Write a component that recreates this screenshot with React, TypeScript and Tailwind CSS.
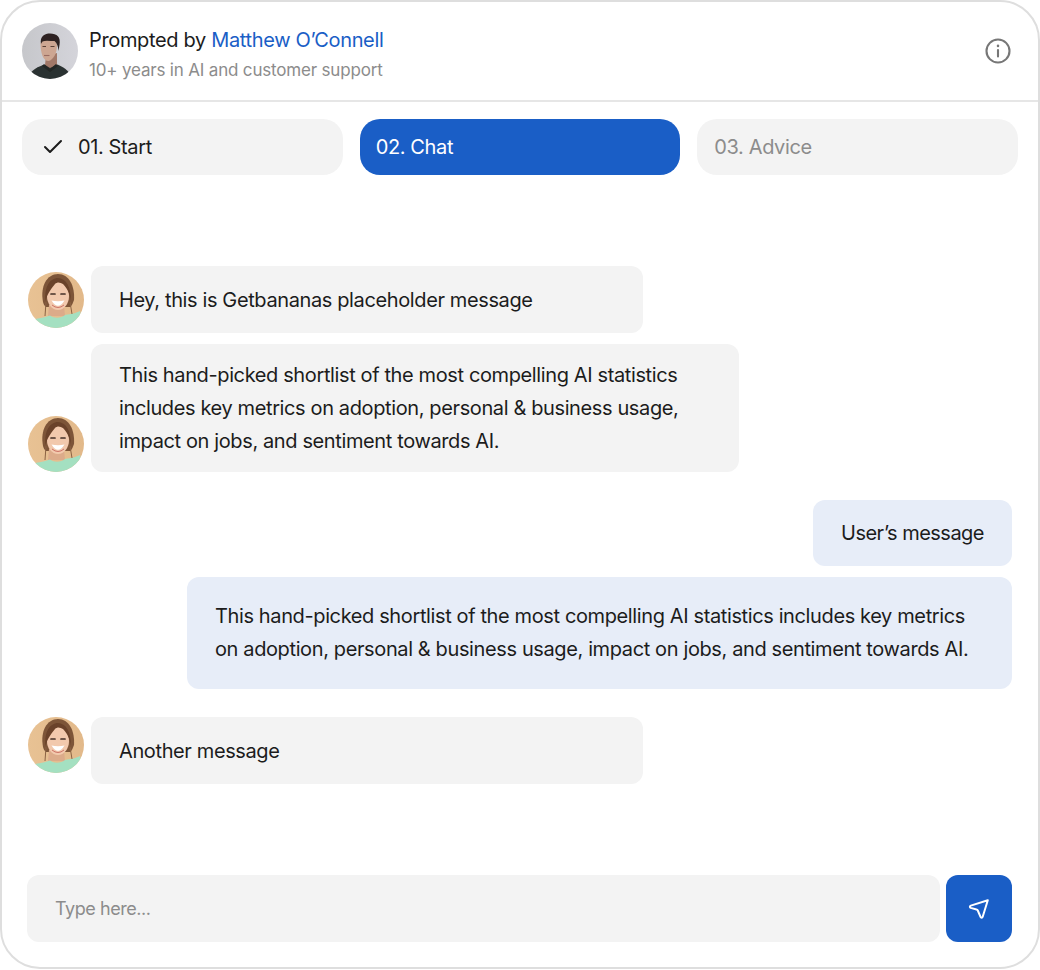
import React from "react";
import { Check } from "lucide-react";

function Man() {
  return (
    <svg viewBox="0 0 56 56" className="w-14 h-14 rounded-full shrink-0">
      <defs>
        <filter id="mb"><feGaussianBlur stdDeviation="0.6" /></filter>
        <linearGradient id="mbg" x1="0" y1="0" x2="1" y2="0">
          <stop offset="0" stopColor="#c6c7cb" />
          <stop offset="1" stopColor="#d4d4da" />
        </linearGradient>
      </defs>
      <rect width="56" height="56" fill="url(#mbg)" />
      <g filter="url(#mb)">
        <path d="M6 56 C8 48 13 45 21 42 L34 41 C41 44 47 46 50 56 Z" fill="#2c3230" />
        <path d="M24 33 L35 30 L35 42 L28 45 L23 42 Z" fill="#a17867" />
        <path d="M18.500 20 C18.500 30 21 38 26.500 38 C31 37 35 31 35 22 L33 15 L22 15 Z" fill="#cda692" />
        <path d="M19 21 C17.500 13 23 10.500 28 10.500 C35 10.500 39 14 37.500 22 L36.500 28 C36 23 35 20 32.500 18 C28 18 23.500 17 20.500 18.500 C19.800 19.500 19.500 20 19 21 Z" fill="#2e2422" />
        <path d="M20.500 23.500 L24 23.500 M28.500 23.500 L32.500 23.500" stroke="#5a3f36" strokeWidth="1.100" />
        <path d="M22 32.500 L27.500 32.500" stroke="#9a6c62" strokeWidth="1.100" />
        <path d="M22 41 L28 46 L34 41 L36 43 L28 49 L20 43 Z" fill="#212625" />
      </g>
    </svg>
  );
}

function Woman() {
  return (
    <svg viewBox="0 0 56 56" className="w-14 h-14 rounded-full shrink-0">
      <defs>
        <filter id="wb"><feGaussianBlur stdDeviation="0.55" /></filter>
        <linearGradient id="wbg" x1="0" y1="0" x2="1" y2="0">
          <stop offset="0" stopColor="#e8c294" />
          <stop offset="1" stopColor="#e2b98a" />
        </linearGradient>
      </defs>
      <rect width="56" height="56" fill="url(#wbg)" />
      <g filter="url(#wb)">
        <path d="M15 30 C12 14 19 2 30 2 C41 2 47 14 46 28 C45 31 44 33 42.500 35 L18 35 C16.500 34 15.500 32 15 30 Z" fill="#7d5539" />
        <path d="M21 33 L20 44 L37 44 L36 33 Z" fill="#dcab8a" />
        <path d="M7 47 C13 46 18 45 22 43.500 C27 47 33 46 37 43 C44 42 48 41 52 39 L56 56 L0 56 Z" fill="#a4e0c1" />
        <ellipse cx="30" cy="24" rx="11" ry="14" fill="#f2c9ad" />
        <path d="M17.500 29 C16 15 22 6 30 6 C38 6 43 15 43 29 C42 23 40 17 35 12 C32 10 29 10 27 12 C24 16 20 20 17.500 29 Z" fill="#6a4329" />
        <path d="M23 22 L27 22 M33 22 L37 22" stroke="#453228" strokeWidth="1.700" strokeLinecap="round" />
        <path d="M23.500 28.500 Q30 39 36.500 28.500 Q30 30 23.500 28.500 Z" fill="#ffffff" />
        <path d="M24 33 Q30 38 36 33" stroke="#c7695f" strokeWidth="0.900" fill="none" />
        <path d="M18 30 L17 44 M42 30 L44 42" stroke="#8a6243" strokeWidth="1" fill="none" />
      </g>
    </svg>
  );
}

const bubble = "rounded-xl bg-[#f3f3f3] text-[20px] leading-[33px] tracking-[-0.38px] text-[#1c1c1c] px-7";
const user = "rounded-xl bg-[#e7edf8] text-[20px] leading-[33px] text-[#1c1c1c] px-7";

export default function App() {
  return (
    <div className="w-[1040px] h-[970px] bg-white" style={{ fontFamily: "Inter, sans-serif" }}>
      <div className="w-[1040px] h-[969px] border-2 border-[#dedede] rounded-[40px] flex flex-col overflow-hidden">
        <header className="h-[100px] border-b-2 border-[#e6e6e6] flex items-center pl-[20px] pr-[25px] shrink-0">
          <Man />
          <div className="ml-[11px] flex-1 pt-[4px]">
            <div className="text-[20px] leading-[28px] tracking-[-0.34px] text-[#1c1c1c]">
              Prompted by <span className="text-[#1a5ec6]">Matthew O’Connell</span>
            </div>
            <div className="text-[17px] leading-[22px] mt-[5px] text-[#8c8c8c] tracking-[-0.18px]">10+ years in AI and customer support</div>
          </div>
          <svg viewBox="0 0 30 30" className="w-[30px] h-[30px]" fill="none" stroke="#777777" strokeWidth="2.100" strokeLinecap="round">
            <circle cx="15" cy="15" r="11.500" />
            <path d="M15 14 V20.500" />
            <path d="M15 9.800 V10" strokeWidth="2.500" />
          </svg>
        </header>

        <nav className="flex gap-[17px] px-[20px] pt-[17px] shrink-0 tracking-[-0.38px]">
          <div className="h-14 w-[321px] rounded-[20px] bg-[#f3f3f3] flex items-center pl-[19px] text-[20px] text-[#1c1c1c]">
            <Check size={24} strokeWidth={2} className="mr-[13px]" />
            01. Start
          </div>
          <div className="h-14 w-[321px] rounded-[20px] bg-[#1a5ec6] flex items-center pl-[16px] text-[20px] text-white">02. Chat</div>
          <div className="h-14 w-[321px] rounded-[20px] bg-[#f3f3f3] flex items-center pl-[17px] text-[20px] text-[#8c8c8c]">03. Advice</div>
        </nav>

        <main className="flex flex-col pl-[26px] pr-[26px] pt-[91px] flex-1">
          <div className="flex items-center gap-[7px]">
            <Woman />
            <div className={`${bubble} w-[552px] h-[67px] flex items-center pt-[1px]`}>Hey, this is Getbananas placeholder message</div>
          </div>
          <div className="flex items-end gap-[7px] mt-[11px]">
            <Woman />
            <div className={`${bubble} w-[648px] h-[128px] pt-[14.500px]`}>
              This hand-picked shortlist of the most compelling AI statistics includes key metrics on adoption, personal &amp; business usage, impact on jobs, and sentiment towards AI.
            </div>
          </div>
          <div className={`${user} self-end mt-[28px] h-[66px] flex items-center tracking-[-0.52px]`}>User’s message</div>
          <div className={`${user} self-end mt-[11px] w-[825px] h-[112px] pt-[23px] tracking-[-0.38px]`}>
            This hand-picked shortlist of the most compelling AI statistics includes key metrics on adoption, personal &amp; business usage, impact on jobs, and sentiment towards AI.
          </div>
          <div className="flex items-start gap-[7px] mt-[28px]">
            <Woman />
            <div className={`${bubble} w-[552px] h-[67px] flex items-center pt-[1px]`}>Another message</div>
          </div>
        </main>

        <footer className="flex gap-[6px] pl-[25px] pr-[26px] pb-[25px] shrink-0">
          <div className="w-[913px] h-[67px] rounded-xl bg-[#f3f3f3] flex items-center pl-[28px] text-[18px] tracking-[-0.45px] text-[#8c8c8c]">Type here...</div>
          <button className="w-[66px] h-[67px] rounded-xl bg-[#1a5ec6] flex items-center justify-center">
            <svg viewBox="0 0 24 24" className="w-6 h-6" fill="none" stroke="#ffffff" strokeWidth="2" strokeLinejoin="round" strokeLinecap="round">
              <path d="M20.800 3.200 L3.800 8.600 C2.600 9 2.600 10.400 3.700 10.900 L9.500 12.500 C10.300 12.700 10.800 13.200 11 14 L13.500 19.800 C14 21 15.300 20.900 15.700 19.700 Z" />
            </svg>
          </button>
        </footer>
      </div>
    </div>
  );
}
